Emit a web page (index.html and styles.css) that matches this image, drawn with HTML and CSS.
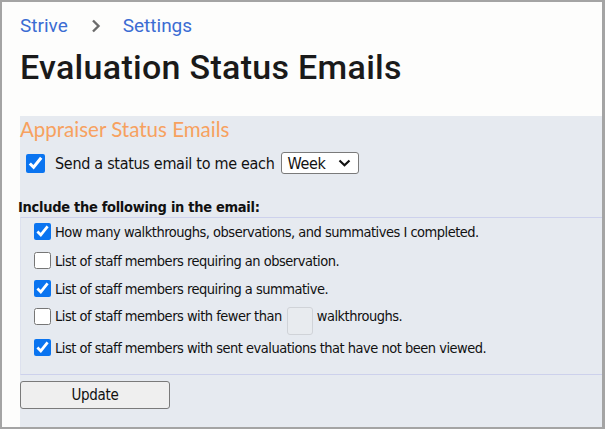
FILE: index.html
```html
<!DOCTYPE html>
<html>
<head>
<meta charset="utf-8">
<link rel="stylesheet" href="styles.css">
</head>
<body>
<div class="frame">
  <nav class="crumbs">
    <a class="crumb">Strive</a>
    <svg class="chev" width="10" height="14" viewBox="0 0 10 14"><path d="M2 1.5 L7.5 7 L2 12.5" fill="none" stroke="#6b6b6b" stroke-width="2.4"/></svg>
    <a class="crumb">Settings</a>
  </nav>
  <h1 class="title">Evaluation Status Emails</h1>
  <section class="panel">
    <h2 class="panel-title">Appraiser Status Emails</h2>
    <div class="send-row">
      <input type="checkbox" class="cb-big" checked>
      <span>Send a status email to me each</span>
      <span class="select">Week<svg width="13" height="8" viewBox="0 0 13 8"><path d="M1.5 1.5 L6.5 6.2 L11.5 1.5" fill="none" stroke="#111" stroke-width="2.2"/></svg></span>
    </div>
    <div class="include-label">Include the following in the email:</div>
    <div class="options">
      <label class="opt opt-first"><input type="checkbox" class="cb" checked><span>How many walkthroughs, observations, and summatives I completed.</span></label>
      <label class="opt"><input type="checkbox" class="cb"><span>List of staff members requiring an observation.</span></label>
      <label class="opt"><input type="checkbox" class="cb" checked><span>List of staff members requiring a summative.</span></label>
      <label class="opt opt-input"><input type="checkbox" class="cb"><span>List of staff members with fewer than</span><span class="num"></span><span>walkthroughs.</span></label>
      <label class="opt"><input type="checkbox" class="cb" checked><span>List of staff members with sent evaluations that have not been viewed.</span></label>
    </div>
    <button class="update">Update</button>
  </section>
</div>
</body>
</html>
```
FILE: styles.css
```css
html, body { margin: 0; padding: 0; background: #fdfdfc; }
.frame {
  box-sizing: border-box;
  width: 605px;
  height: 429px;
  border: 2px solid #a4a4a4;
  border-right-width: 3px;
  background: #fdfdfc;
  padding-left: 18px;
  display: flex;
  flex-direction: column;
  overflow: hidden;
}
.crumbs {
  display: flex;
  align-items: center;
  height: 20px;
  margin-top: 13px;
  font-family: Roboto, "Liberation Sans", sans-serif;
  font-size: 19px;
  color: #3b6cd3;
}
.crumb { color: #3b6cd3; }
.chev { margin: 1px 22px 0 23px; }
.title {
  margin: 12px 0 0 0;
  font-family: Roboto, "Liberation Sans", sans-serif;
  font-weight: 500;
  font-size: 34px;
  line-height: 40px;
  color: #1a1a1a;
  letter-spacing: 0.3px;
}
.panel {
  margin-top: 29px;
  flex: 1;
  background: #e6eaf0;
  display: flex;
  flex-direction: column;
  font-family: "DejaVu Sans Condensed", "DejaVu Sans", sans-serif;
  font-size: 14.5px;
  letter-spacing: -0.5px;
  color: #111;
}
.panel-title {
  margin: 1px 0 0 0;
  font-family: Lato, "Open Sans", sans-serif;
  font-weight: 400;
  font-size: 20.5px;
  letter-spacing: 0;
  line-height: 25px;
  color: #f7a15f;
}
.send-row {
  display: flex;
  align-items: center;
  margin-top: 10px;
  margin-left: 6px;
  height: 22px;
  font-size: 16px;
  letter-spacing: -0.3px;
}
.cb-big {
  width: 19px;
  height: 19px;
  margin: 0 10px 0 0;
  accent-color: #0a74f0;
}
.select {
  display: inline-flex;
  align-items: center;
  justify-content: space-between;
  box-sizing: border-box;
  width: 78px;
  height: 22px;
  margin-left: 6px;
  padding: 0 7px 0 6px;
  border: 1px solid #7a7a7a;
  border-radius: 3px;
  background: #fff;
  font-size: 16px;
}
.include-label {
  margin-top: 25px;
  margin-left: -2px;
  font-weight: bold;
  font-size: 14.5px;
  letter-spacing: -0.3px;
  line-height: 17px;
}
.options {
  margin-top: 1px;
  border-top: 1px solid #cdd1ec;
  border-bottom: 1px solid #cdd1ec;
  border-left: 1px solid #dde1ee;
  padding: 5px 0 18px 13px;
  display: flex;
  flex-direction: column;
  gap: 11px;
}
.opt {
  display: flex;
  align-items: center;
  height: 17px;
}
.opt-first { margin-bottom: 1px; }
.opt-input {
  align-items: flex-start;
  height: 28px;
  margin: 0 0 -8px 0;
}
.opt-input > span:not(.num) { line-height: 17px; }
.cb {
  width: 17px;
  height: 17px;
  margin: 0 4px 0 0;
  accent-color: #0a74f0;
}
.num {
  display: inline-block;
  box-sizing: border-box;
  width: 26px;
  height: 28px;
  margin: -1px 4px 0 5px;
  border: 1px solid #d0d3d8;
  border-radius: 3px;
  background: #e8ebef;
}
.update {
  margin-top: 6px;
  width: 150px;
  height: 28px;
  border: 1px solid #7a7a7a;
  border-radius: 3px;
  background: #efefef;
  font-family: "DejaVu Sans Condensed", "DejaVu Sans", sans-serif;
  font-size: 15px;
  letter-spacing: -0.3px;
  color: #111;
  padding: 0;
}
```
